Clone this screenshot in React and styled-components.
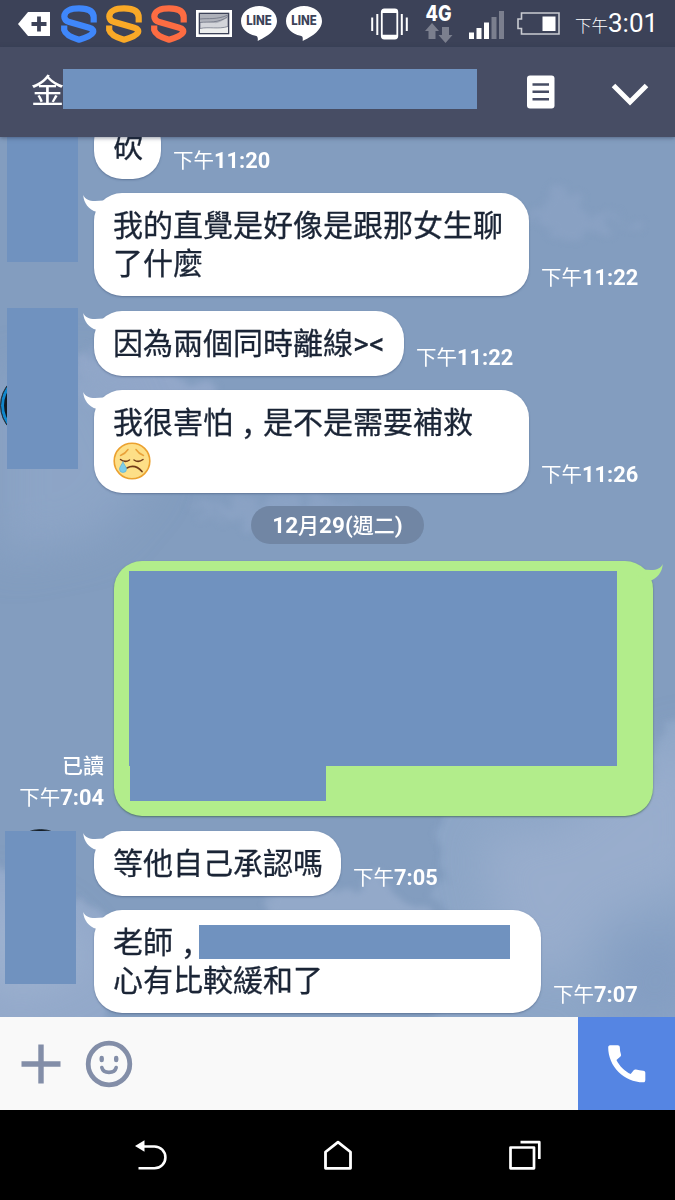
import React from "react";
import styled, { createGlobalStyle } from "styled-components";

const SIcon = ({ color }) => (
  <svg width="36" height="38" viewBox="0 0 36 38" fill="none" stroke={color} strokeWidth="6.2" strokeLinejoin="round">
    <path d="M32.700 17.400V12.500C32.700 5.500 26.500 3.400 18 3.400S3.300 6 3.300 11.500c0 3 1.800 4.600 5 5.600l20 5.600c3.500 1 4.600 2.800 3.600 5C30.500 30.500 24 33 18 34.700 11 32.700 4.500 30 3.200 25V20.500" />
  </svg>
);

const LineIcon = () => (
  <svg width="36" height="36" viewBox="0 0 36 36">
    <path d="M18 0C8 0 0 6.600 0 15c0 7.200 6 13.300 14.500 14.700 2 .4 2.600 1.500 2.200 5.300C24 31.500 36 25 36 15 36 6.600 28 0 18 0Z" fill="#fff" />
    <text x="18" y="19" textAnchor="middle" textLength="25.500" lengthAdjust="spacingAndGlyphs" fontFamily="Inter, sans-serif" fontWeight="800" fontSize="12.500" fill="#3c4258">
      LINE
    </text>
  </svg>
);

const StatusIcons = () => (
  <StyledIcons>
    <svg width="32" height="24" viewBox="0 0 32 24">
      <path d="M0 12 10 0H32V24H10Z" fill="#fff" />
      <path d="M21 4.500V19.500M13.500 12H28.500" stroke="#3c4258" strokeWidth="3.800" />
    </svg>
    <StyledApps>
      <SIcon color="#3f87fb" />
      <SIcon color="#f9a927" />
      <SIcon color="#fd6c42" />
      <svg width="36" height="27" viewBox="0 0 36 27">
        <rect width="36" height="27" fill="#fff" />
        <rect x="3.500" y="3.500" width="29" height="20" fill="#d3d5da" stroke="#3c4258" strokeWidth="1.600" />
        <path d="M4 4h28v4c-6 2-9 6-14 5S10 12 4 12.500Z" fill="#aeb1ba" />
        <path d="M4 9c8-1 17 1 28-4M4 12.500c9-1 18 1 28-6" fill="none" stroke="#666b7b" strokeWidth="0.700" />
        <path d="M4 18.500c9-2 18 1 28-2V23H4Z" fill="#eceded" />
        <path d="M4 18.500c9-2 18 1 28-2" fill="none" stroke="#666b7b" strokeWidth="0.700" />
      </svg>
      <LineIcon />
      <LineIcon />
    </StyledApps>
  </StyledIcons>
);

const SystemIcons = () => (
  <StyledSystem>
    <svg width="37" height="32" viewBox="0 0 37 32" fill="none" stroke="#fff">
      <rect x="10.800" y="1.500" width="15.500" height="29" rx="2.500" strokeWidth="1.800" />
      <path d="M11 3.200H26M11 28.500H26" strokeWidth="3.600" />
      <path d="M1.200 9.500V23M6.300 6V27M30.800 6V27M35.800 9.500V23" strokeWidth="2" />
    </svg>
    <svg width="28" height="47" viewBox="0 0 28 47">
      <text x="0.500" y="20.700" textLength="26" lengthAdjust="spacingAndGlyphs" fontFamily="Inter, sans-serif" fontWeight="800" fontSize="21" fill="#fff">
        4G
      </text>
      <path d="M7 23 14 31H10.500V39H3.500V31H0ZM20.500 43 13.500 35H17V27H24V35H27.500Z" fill="#7b7f8e" />
    </svg>
    <svg width="36" height="28" viewBox="0 0 36 28">
      <path d="M0 21.500h5V28H0ZM7.500 17h5V28h-5ZM15 11.500h5V28h-5Z" fill="#fff" />
      <path d="M22.500 6h5V28h-5ZM30 0h5V28h-5Z" fill="#7b7f8e" />
    </svg>
    <svg width="43" height="23" viewBox="0 0 43 23">
      <path d="M4.500 1H42V22H4.500V16.500H1V7H4.500Z" fill="none" stroke="#c9cbd1" strokeWidth="1.600" />
      <rect x="25.500" y="4.500" width="13" height="14.500" fill="#fff" />
    </svg>
  </StyledSystem>
);

const Clouds = () => (
  <StyledClouds viewBox="0 0 675 880">
    <defs>
      <filter id="soft" filterUnits="userSpaceOnUse" x="-60" y="-60" width="800" height="1000" colorInterpolationFilters="sRGB">
        <feTurbulence type="fractalNoise" baseFrequency="0.03" numOctaves="4" seed="8" />
        <feDisplacementMap in="SourceGraphic" scale="50" xChannelSelector="R" yChannelSelector="G" />
        <feGaussianBlur stdDeviation="3" />
      </filter>
      <filter id="haze" filterUnits="userSpaceOnUse" x="-100" y="-60" width="900" height="1100">
        <feGaussianBlur stdDeviation="22" />
      </filter>
    </defs>
    <g filter="url(#soft)">
      <path d="M530 86 545 60 553 48 570 50 580 80 635 88 600 97 560 108Z" fill="#89a1c3" />
      <path d="M80 205 110 225 160 240 215 245 200 265 120 270 60 250Z" fill="#92a7c9" />
      <path d="M190 365H350L345 378 240 385Z" fill="#8aa2c4" />
      <path d="M192 382 215 379 222 387 200 388Z" fill="#8aa2c4" />
      <path d="M435 680 470 660 660 650V585L720 590V920H430L440 800Z" fill="#8da6c7" />
      <path d="M255 775 290 740 318 732 335 760 362 742 400 752 430 780V800H250Z" fill="#93a9c9" />
      <path d="M-40 720 20 735 45 760 85 770 110 800V920H-40Z" fill="#93a9ca" />
    </g>
    <g filter="url(#haze)">
      <path d="M0 240 100 230 150 340 100 400 0 420Z" fill="#8ea5c7" opacity="0.9" />
      <path d="M480 700 560 690 650 620 700 600V740L600 780 560 850 500 800Z" fill="#9bafce" opacity="0.8" />
      <path d="M-20 750 60 790 90 830 0 860Z" fill="#a2b5d2" opacity="0.8" />
      <path d="M620 800 700 790V890H600Z" fill="#849ec2" />
    </g>
  </StyledClouds>
);

const Tail = ({ $mine }) => (
  <StyledTail width="28" height="20" viewBox="0 0 28 20" $mine={$mine}>
    <path d="M0.300 1C2 5 6 7 12 7L20.500 6.600 27 12 13.500 17.800C6 16 0.500 9 0.300 1Z" fill="currentColor" />
  </StyledTail>
);

const CryFace = () => (
  <StyledFace width="38" height="38" viewBox="0 0 38 38" fill="none" strokeLinecap="round">
    <circle cx="19" cy="19" r="17.800" fill="#fddf87" stroke="#eba12f" strokeWidth="1.600" />
    <path d="M7.500 13.500Q12.500 11.500 15 7.500M23 7.500Q25.500 11.500 30.500 13.500" stroke="#e9a23a" strokeWidth="1.500" />
    <path d="M7.500 17.500Q12 21 16.500 18M21 18Q25.500 21 30 17.500" stroke="#713a18" strokeWidth="1.500" />
    <path d="M14 26Q22 21.500 29 29.500" stroke="#713a18" strokeWidth="1.700" />
    <path d="M10 20C8.500 23 6.500 25 6.500 27a3.500 3.500 0 0 0 7 0C13.500 25 11 22.500 10 20Z" fill="#7cccea" stroke="#52add2" strokeWidth="0.600" />
  </StyledFace>
);

const Time = ({ value }) => (
  <StyledTime>
    <span>下午</span>
    {value}
  </StyledTime>
);

const Message = ({ children, time, width }) => (
  <StyledRow>
    <StyledBubble $width={width}>
      <Tail />
      {children}
    </StyledBubble>
    <Time value={time} />
  </StyledRow>
);

const App = () => (
  <>
    <GlobalStyle />
    <StyledScreen>
      <StyledStatusBar>
        <StatusIcons />
        <SystemIcons />
        <StyledClock>
          <span>下午</span>3:01
        </StyledClock>
      </StyledStatusBar>

      <StyledHeader>
        <StyledTitle>金</StyledTitle>
        <StyledHeaderMask />
        <svg width="28" height="34" viewBox="0 0 28 34">
          <rect y="0.500" width="27.500" height="33" rx="3" fill="#fff" />
          <path d="M5.500 9.500H22M5.500 16.700H22M5.500 24.200H22" stroke="#474d64" strokeWidth="2.600" />
        </svg>
        <svg width="38" height="24" viewBox="0 0 38 24">
          <path d="M2.500 2.500 19 19 35.500 2.500" fill="none" stroke="#fff" strokeWidth="5" />
        </svg>
      </StyledHeader>

      <StyledChat>
        <Clouds />
        <StyledConversation>
          <StyledGroup>
            <StyledAvatar $top={22} $left={7} $height={126} />
            <StyledMessages>
              <Message time="11:20">砍</Message>
              <Message time="11:22" width={435}>
                我的直覺是好像是跟那女生聊
                <br />
                了什麼
              </Message>
            </StyledMessages>
          </StyledGroup>

          <StyledGroup>
            <StyledAvatar $top={-3} $left={7} $height={161}>
              <StyledPhoto $x={-7} $y={64} $ring />
            </StyledAvatar>
            <StyledMessages>
              <Message time="11:22" width={310}>
                因為兩個同時離線<StyledLatin>&gt;&lt;</StyledLatin>
              </Message>
              <Message time="11:26" width={435}>
                我很害怕<StyledMark>，</StyledMark>是不是需要補救
                <br />
                <CryFace />
              </Message>
            </StyledMessages>
          </StyledGroup>

          <StyledDate>
            12<span>月</span>29(<span>週二</span>)
          </StyledDate>

          <StyledMine>
            <StyledReceipt>
              <span>已讀</span>
              <Time value="7:04" />
            </StyledReceipt>
            <StyledGreenBubble>
              <Tail $mine />
              <StyledMineMask $width={488} $height={195} />
              <StyledMineMask $width={196} $height={35} $indent={1} />
            </StyledGreenBubble>
          </StyledMine>

          <StyledGroup>
            <StyledAvatar $top={0} $left={5} $height={153}>
              <StyledPhoto $x={2} $y={-2} />
            </StyledAvatar>
            <StyledMessages>
              <Message time="7:05" width={247}>
                等他自己承認嗎
              </Message>
              <Message time="7:07" width={447}>
                老師<StyledMark>，</StyledMark>
                <StyledTextMask />
                <br />
                心有比較緩和了
              </Message>
            </StyledMessages>
          </StyledGroup>
        </StyledConversation>
      </StyledChat>

      <StyledInputBar>
        <StyledTools>
          <svg width="40" height="40" viewBox="0 0 40 40">
            <path d="M20 0.500V39.500M0.500 20H39.500" stroke="#838ea8" strokeWidth="5.400" />
          </svg>
          <svg width="48" height="48" viewBox="0 0 48 48" fill="none" stroke="#838ea8" strokeLinecap="round">
            <circle cx="24" cy="24" r="20.800" strokeWidth="4.800" />
            <path d="M16.700 18V20M31.200 18V20" strokeWidth="4.400" />
            <path d="M16.800 27.500C18.500 34 29.500 34 31.200 27.500" strokeWidth="3.600" />
          </svg>
        </StyledTools>
        <StyledCall>
          <svg width="49.500" height="49.500" viewBox="0 0 24 24" fill="#fff">
            <path d="M20.010 15.380c-1.230 0-2.420-.2-3.530-.56a.977.977 0 0 0-1.010.24l-1.570 1.970c-2.830-1.350-5.480-3.900-6.890-6.830l1.950-1.660c.27-.28.350-.67.240-1.020-.37-1.110-.56-2.300-.56-3.530 0-.54-.45-.99-.99-.99H4.190C3.650 3 3 3.240 3 3.990 3 13.280 10.730 21 20.010 21c.71 0 .99-.63.990-1.180v-3.450c0-.54-.45-.99-.99-.99Z" />
          </svg>
        </StyledCall>
      </StyledInputBar>

      <StyledNav>
        <svg width="32" height="31" viewBox="0 0 32 31">
          <path d="M9 6.500H19.500a10.900 10.900 0 0 1 0 21.800H3.500" fill="none" stroke="#fff" strokeWidth="2.600" />
          <path d="M0 6 9.500 0.300V11.700Z" fill="#fff" />
        </svg>
        <svg width="28" height="31" viewBox="0 0 28 31">
          <path d="M1.500 28.300V12L14 2.200 26.500 12V28.300Z" fill="none" stroke="#fff" strokeWidth="2.800" strokeLinejoin="round" />
        </svg>
        <svg width="32" height="31" viewBox="0 0 32 31" fill="none" stroke="#fff" strokeWidth="2.700" strokeLinejoin="round">
          <path d="M1.500 7.500H25V28.300H1.500Z" />
          <path d="M11.500 2.200H30.300V19" />
        </svg>
      </StyledNav>
    </StyledScreen>
  </>
);

export default App;

const GlobalStyle = createGlobalStyle`
  * {
    box-sizing: border-box;
  }
  body {
    margin: 0;
    background: #000;
  }
  svg {
    display: block;
    flex-shrink: 0;
  }
`;

const StyledScreen = styled.main`
  display: flex;
  flex-direction: column;
  width: 675px;
  height: 1200px;
  overflow: hidden;
  font-family: Roboto, "Noto Sans CJK TC", sans-serif;
`;

const StyledStatusBar = styled.header`
  display: flex;
  align-items: center;
  height: 47px;
  padding-left: 18px;
  background: #3c4258;
`;

const StyledIcons = styled.div`
  display: flex;
  align-items: center;
  gap: 11px;
  margin-right: 49px;
`;

const StyledApps = styled.div`
  display: flex;
  align-items: center;
  gap: 9px;
`;

const StyledSystem = styled.div`
  display: flex;
  align-items: center;
  gap: 17px;
  svg:nth-child(3) {
    margin: 3px -5px 0 -1px;
  }
`;

const StyledClock = styled.div`
  margin-left: 15px;
  padding-top: 3px;
  color: white;
  font-size: 26px;
  line-height: 44px;
  white-space: nowrap;
  span {
    font-size: 16.500px;
    font-weight: 300;
  }
`;

const StyledHeader = styled.section`
  display: flex;
  align-items: center;
  height: 90px;
  padding-left: 31px;
  background: #474d64;
  box-shadow: 0 1px 4px rgba(40, 50, 75, 0.5);
  z-index: 1;
  svg:last-child {
    margin: 6px 0 0 56px;
  }
`;

const StyledTitle = styled.h1`
  width: 32px;
  margin: 0;
  color: white;
  font-size: 33px;
  font-weight: 400;
  line-height: 40px;
`;

const StyledHeaderMask = styled.div`
  width: 414px;
  height: 40px;
  margin: 0 50px 6px 0;
  background: #7092bf;
  z-index: 1;
`;

const StyledChat = styled.section`
  position: relative;
  height: 880px;
  background: #839dbf;
  overflow: hidden;
`;

const StyledClouds = styled.svg`
  position: absolute;
  inset: 0;
  width: 100%;
  height: 100%;
`;

const StyledConversation = styled.div`
  position: relative;
  margin-top: -23px;
`;

const StyledGroup = styled.div`
  display: flex;
  margin-bottom: 15px;
`;

const StyledMessages = styled.div`
  display: flex;
  flex-direction: column;
  gap: 14px;
`;

const StyledAvatar = styled.div`
  position: relative;
  flex-shrink: 0;
  width: 71px;
  height: ${(props) => props.$height}px;
  margin: ${(props) => props.$top}px ${(props) => 23 - props.$left}px 0
    ${(props) => props.$left}px;
  &::after {
    content: "";
    position: absolute;
    inset: 0;
    background: #7092bf;
  }
`;

const StyledPhoto = styled.div`
  position: absolute;
  left: ${(props) => props.$x}px;
  top: ${(props) => props.$y}px;
  width: 67px;
  height: 67px;
  border-radius: 50%;
  background: #111a24;
  border: 1px solid #26333f;
  box-shadow: ${(props) => (props.$ring ? "inset 0 0 0 3px #1187cc" : "none")};
`;

const StyledRow = styled.div`
  display: flex;
  align-items: flex-end;
  gap: 12px;
`;

const StyledBubble = styled.div`
  position: relative;
  width: ${(props) => (props.$width ? `${props.$width}px` : "auto")};
  padding: 11px 18px 16px 19px;
  border-radius: 28px;
  background: white;
  box-shadow: 0 1px 2px rgba(60, 80, 115, 0.5);
  color: #1b2536;
  font-family: "Noto Sans CJK TC", sans-serif;
  font-size: 30px;
  line-height: 38px;
  white-space: nowrap;
  -webkit-text-stroke: 0.3px #1b2536;
`;

const StyledTail = styled.svg`
  position: absolute;
  top: ${(props) => (props.$mine ? 1.5 : 1)}px;
  left: ${(props) => (props.$mine ? "auto" : "-11px")};
  right: ${(props) => (props.$mine ? "-10px" : "auto")};
  transform: ${(props) => (props.$mine ? "scaleX(-1)" : "none")};
  color: ${(props) => (props.$mine ? "#b2ed8b" : "white")};
`;

const StyledMark = styled.span`
  line-height: 0;
  vertical-align: -11px;
`;

const StyledLatin = styled.span`
  font-family: Roboto, sans-serif;
  letter-spacing: 0.5px;
  line-height: 0;
`;

const StyledFace = styled.svg`
  margin: 3px 0 -3px;
`;

const StyledTextMask = styled.span`
  display: inline-block;
  width: 311px;
  height: 34px;
  margin: 4px 0 0 -4px;
  vertical-align: top;
  background: #7092bf;
`;

const StyledTime = styled.time`
  margin-bottom: 5px;
  color: white;
  font-size: 21.800px;
  font-weight: 700;
  line-height: 26px;
  white-space: nowrap;
  span {
    font-size: 20.500px;
    font-weight: 400;
  }
`;

const StyledDate = styled.div`
  width: 173px;
  height: 38px;
  margin: -2px auto 17px 251px;
  border-radius: 19px;
  background: #7186a4;
  color: white;
  font-size: 22.500px;
  font-weight: 700;
  line-height: 38px;
  text-align: center;
  span {
    font-size: 21px;
    font-weight: 500;
  }
`;

const StyledMine = styled.div`
  display: flex;
  justify-content: flex-end;
  align-items: flex-end;
  gap: 10px;
  margin: 0 22px 15px 0;
`;

const StyledReceipt = styled.div`
  display: flex;
  flex-direction: column;
  align-items: flex-end;
  gap: 6px;
  color: white;
  > span {
    font-size: 21px;
    font-weight: 500;
    line-height: 26px;
  }
`;

const StyledGreenBubble = styled.div`
  position: relative;
  width: 539px;
  height: 255px;
  padding: 10px 0 0 15px;
  border-radius: 28px;
  background: #b2ed8b;
  box-shadow: 0 1px 2px rgba(60, 100, 75, 0.7);
`;

const StyledMineMask = styled.div`
  width: ${(props) => props.$width}px;
  height: ${(props) => props.$height}px;
  margin-left: ${(props) => props.$indent || 0}px;
  background: #7092bf;
`;

const StyledInputBar = styled.section`
  display: flex;
  height: 93px;
  background: #f9f9f9;
`;

const StyledTools = styled.div`
  display: flex;
  align-items: center;
  gap: 24px;
  flex: 1;
  padding-left: 21px;
`;

const StyledCall = styled.div`
  display: grid;
  place-items: center;
  width: 97px;
  background: #5585e3;
`;

const StyledNav = styled.nav`
  display: flex;
  justify-content: space-between;
  height: 90px;
  padding: 30px 134px 0 135px;
  background: #000;
`;
